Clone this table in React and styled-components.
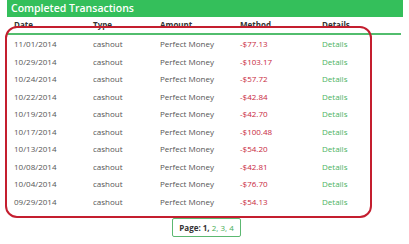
import React from "react";
import styled, { createGlobalStyle } from "styled-components";

const Global = createGlobalStyle`
  html, body { margin: 0; padding: 0; background: #fff; }
  body { font-family: "Open Sans", "Liberation Sans", sans-serif; }
`;

const Page = styled.div`
  position: relative;
  width: 409px;
  height: 244px;
  overflow: hidden;
  background: #fff;
`;

const Panel = styled.div`
  margin: 0 6px 0 7px;
`;

const TitleBar = styled.div`
  height: 17px;
  background: #34bf5b;
  color: #fff;
  font-weight: 600;
  font-size: 10.5px;
  line-height: 16px;
  padding-left: 4px;
`;

const Table = styled.div`
  display: grid;
  grid-template-columns: 79px 67px 80px 82px 1fr;
  margin-right: 2px;
`;

const HeadCell = styled.div`
  height: 16px;
  line-height: 16px;
  padding-left: 7px;
  font-size: 8px;
  font-weight: 700;
  color: #333;
  border-bottom: 2px solid #52bd6d;
`;

const Cell = styled.div`
  height: 17.56px;
  line-height: 17.56px;
  padding-left: 7px;
  font-size: 8px;
  color: ${(p) => (p.$tone === "red" ? "#c8283d" : p.$tone === "green" ? "#4cb35f" : "#555")};
  white-space: nowrap;
`;

const Pager = styled.div`
  display: flex;
  justify-content: center;
  margin-top: 8px;
  padding-left: 3px;
`;

const PagerBox = styled.div`
  border: 1px solid #5cb871;
  border-radius: 2px;
  height: 17px;
  line-height: 17px;
  padding: 0 6px;
  font-size: 8px;
  font-weight: 700;
  color: #333;
`;

const PageLink = styled.span`
  color: #3fae55;
  font-weight: 400;
`;

const Annotation = styled.div`
  position: absolute;
  left: 5px;
  top: 26px;
  width: 363px;
  height: 188px;
  border: 2px solid #c41e2f;
  border-radius: 12px;
  pointer-events: none;
`;

const rows = [
  ["11/01/2014", "-$77.13"],
  ["10/29/2014", "-$103.17"],
  ["10/24/2014", "-$57.72"],
  ["10/22/2014", "-$42.84"],
  ["10/19/2014", "-$42.70"],
  ["10/17/2014", "-$100.48"],
  ["10/13/2014", "-$54.20"],
  ["10/08/2014", "-$42.81"],
  ["10/04/2014", "-$76.70"],
  ["09/29/2014", "-$54.13"],
];

export default function App() {
  return (
    <Page>
      <Global />
      <Panel>
        <TitleBar>Completed Transactions</TitleBar>
        <Table>
          <HeadCell>Date</HeadCell>
          <HeadCell>Type</HeadCell>
          <HeadCell>Amount</HeadCell>
          <HeadCell>Method</HeadCell>
          <HeadCell>Details</HeadCell>
          {rows.map(([d, a]) => (
            <React.Fragment key={d}>
              <Cell>{d}</Cell>
              <Cell>cashout</Cell>
              <Cell>Perfect Money</Cell>
              <Cell $tone="red">{a}</Cell>
              <Cell $tone="green">Details</Cell>
            </React.Fragment>
          ))}
        </Table>
        <Pager>
          <PagerBox>
            Page: 1, <PageLink>2, 3, 4</PageLink>
          </PagerBox>
        </Pager>
      </Panel>
      <Annotation />
    </Page>
  );
}
